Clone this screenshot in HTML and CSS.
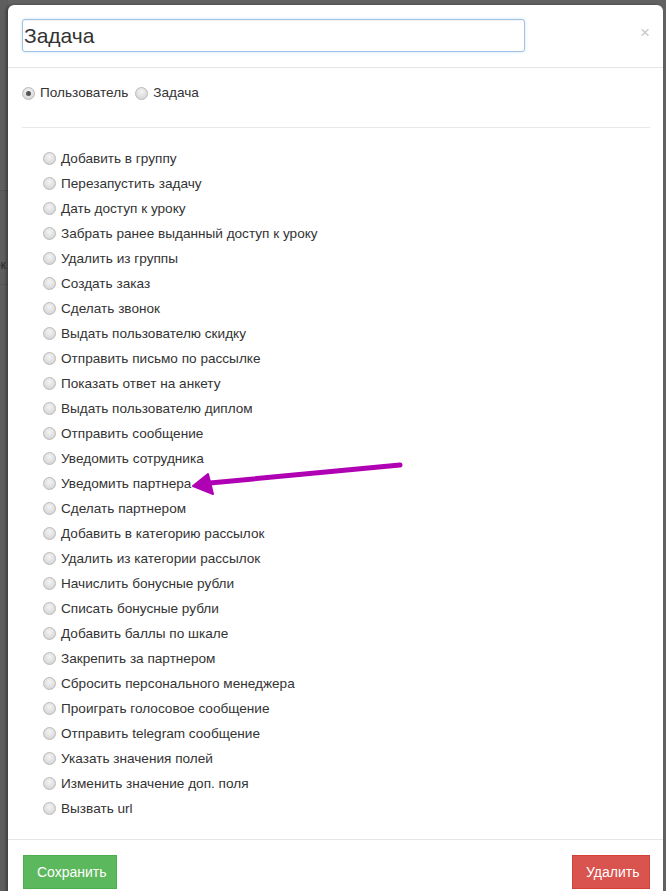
FILE: index.html
```html
<!DOCTYPE html>
<html lang="ru">
<head>
<meta charset="utf-8">
<link rel="stylesheet" href="styles.css">
</head>
<body>
<div class="backdrop">
  <div class="bg-line bg-line-1"></div>
  <div class="bg-text">ок</div>
  <div class="bg-line bg-line-2"></div>
</div>
<div class="modal">
  <div class="modal-header">
    <input class="title-input" type="text" value="Задача">
    <span class="close">×</span>
  </div>
  <div class="modal-body">
    <div class="type-row">
      <label class="opt"><span class="radio checked"></span>Пользователь</label>
      <label class="opt"><span class="radio"></span>Задача</label>
    </div>
    <hr class="sep">
    <ul class="actions">
      <li><span class="radio"></span>Добавить в группу</li>
      <li><span class="radio"></span>Перезапустить задачу</li>
      <li><span class="radio"></span>Дать доступ к уроку</li>
      <li><span class="radio"></span>Забрать ранее выданный доступ к уроку</li>
      <li><span class="radio"></span>Удалить из группы</li>
      <li><span class="radio"></span>Создать заказ</li>
      <li><span class="radio"></span>Сделать звонок</li>
      <li><span class="radio"></span>Выдать пользователю скидку</li>
      <li><span class="radio"></span>Отправить письмо по рассылке</li>
      <li><span class="radio"></span>Показать ответ на анкету</li>
      <li><span class="radio"></span>Выдать пользователю диплом</li>
      <li><span class="radio"></span>Отправить сообщение</li>
      <li><span class="radio"></span>Уведомить сотрудника</li>
      <li><span class="radio"></span>Уведомить партнера</li>
      <li><span class="radio"></span>Сделать партнером</li>
      <li><span class="radio"></span>Добавить в категорию рассылок</li>
      <li><span class="radio"></span>Удалить из категории рассылок</li>
      <li><span class="radio"></span>Начислить бонусные рубли</li>
      <li><span class="radio"></span>Списать бонусные рубли</li>
      <li><span class="radio"></span>Добавить баллы по шкале</li>
      <li><span class="radio"></span>Закрепить за партнером</li>
      <li><span class="radio"></span>Сбросить персонального менеджера</li>
      <li><span class="radio"></span>Проиграть голосовое сообщение</li>
      <li><span class="radio"></span>Отправить telegram сообщение</li>
      <li><span class="radio"></span>Указать значения полей</li>
      <li><span class="radio"></span>Изменить значение доп. поля</li>
      <li><span class="radio"></span>Вызвать url</li>
    </ul>
  </div>
  <div class="modal-footer">
    <button class="btn btn-save">Сохранить</button>
    <button class="btn btn-delete">Удалить</button>
  </div>
</div>
<svg class="arrow" width="666" height="891" viewBox="0 0 666 891">
  <path d="M400 465 L210 483" stroke="#b000b4" stroke-width="5" stroke-linecap="round" fill="none"/>
  <path d="M193 486 L208 474 L213 494 Z" fill="#b000b4" stroke="#b000b4" stroke-width="2" stroke-linejoin="round"/>
</svg>
</body>
</html>
```
FILE: styles.css
```css
html, body {
  margin: 0;
  padding: 0;
}
body {
  background: #626262;
  font-family: "Liberation Sans", Arial, sans-serif;
  color: #333;
  width: 666px;
  height: 891px;
  overflow: hidden;
  position: relative;
}
.backdrop {
  position: absolute;
  left: 0;
  top: 0;
  width: 8px;
  height: 891px;
  background: #5e5e5e;
  overflow: hidden;
}
.bg-line {
  position: absolute;
  left: 0;
  width: 8px;
  height: 1px;
  background: #555;
}
.bg-line-1 { top: 190px; }
.bg-line-2 { top: 284px; }
.bg-text {
  position: absolute;
  left: -6px;
  top: 258px;
  font-size: 12px;
  color: #2a2a2a;
}
.modal {
  position: relative;
  margin: 5px 0 0 8px;
  width: 655px;
  background: #fff;
  border-radius: 6px;
  box-shadow: -2px 0 3px rgba(0,0,0,0.35);
}
.modal-header {
  display: flex;
  align-items: flex-start;
  justify-content: space-between;
  padding: 14px 14px 15px 14px;
  border-bottom: 1px solid #e5e5e5;
}
.title-input {
  width: 503px;
  height: 33px;
  box-sizing: border-box;
  border: 1px solid #9fc3e6;
  border-radius: 3px;
  padding: 0 1px;
  font-family: "Liberation Sans", Arial, sans-serif;
  font-size: 21px;
  color: #333;
  outline: none;
  box-shadow: inset 0 1px 1px rgba(0,0,0,0.05), 0 0 3px rgba(102,175,233,0.35);
}
.close {
  font-size: 17px;
  line-height: 17px;
  color: #c8c8c8;
  margin-top: 5px;
  margin-right: -1px;
}
.modal-body {
  padding: 16px 13px 18px 14px;
  font-size: 13.6px;
}
.type-row {
  display: flex;
  gap: 7px;
  height: 18px;
  line-height: 18px;
}
.opt {
  display: flex;
  align-items: center;
}
.radio {
  display: inline-block;
  width: 11px;
  height: 11px;
  border: 1px solid #b9b9b9;
  border-radius: 50%;
  background: radial-gradient(circle at 50% 35%, #f4f4f4 0%, #dedede 60%, #cfcfcf 100%);
  margin-right: 5px;
  flex: none;
  position: relative;
  box-sizing: content-box;
}
.radio.checked::after {
  content: "";
  position: absolute;
  left: 3px;
  top: 3px;
  width: 5px;
  height: 5px;
  border-radius: 50%;
  background: #555;
}
.sep {
  border: 0;
  border-top: 1px solid #e8e8e8;
  margin: 25px 0 0 0;
}
.actions {
  list-style: none;
  margin: 18px 0 0 0;
  padding: 0 0 0 21px;
}
.actions li {
  display: flex;
  align-items: center;
  height: 25px;
  line-height: 25px;
  color: #333;
}
.modal-footer {
  display: flex;
  justify-content: space-between;
  padding: 15px 13px 10px 15px;
  border-top: 1px solid #e5e5e5;
}
.btn {
  height: 34px;
  border-radius: 0;
  color: #fff;
  font-family: "Liberation Sans", Arial, sans-serif;
  font-size: 14px;
  padding: 0 13px;
  cursor: pointer;
}
.btn-save {
  background: #5cb85c;
  border: 1px solid #4cae4c;
  width: 94px;
}
.btn-delete {
  background: #d9534f;
  border: 1px solid #d43f3a;
  width: 78px;
}
.arrow {
  position: absolute;
  left: 0;
  top: 0;
  pointer-events: none;
}
```
